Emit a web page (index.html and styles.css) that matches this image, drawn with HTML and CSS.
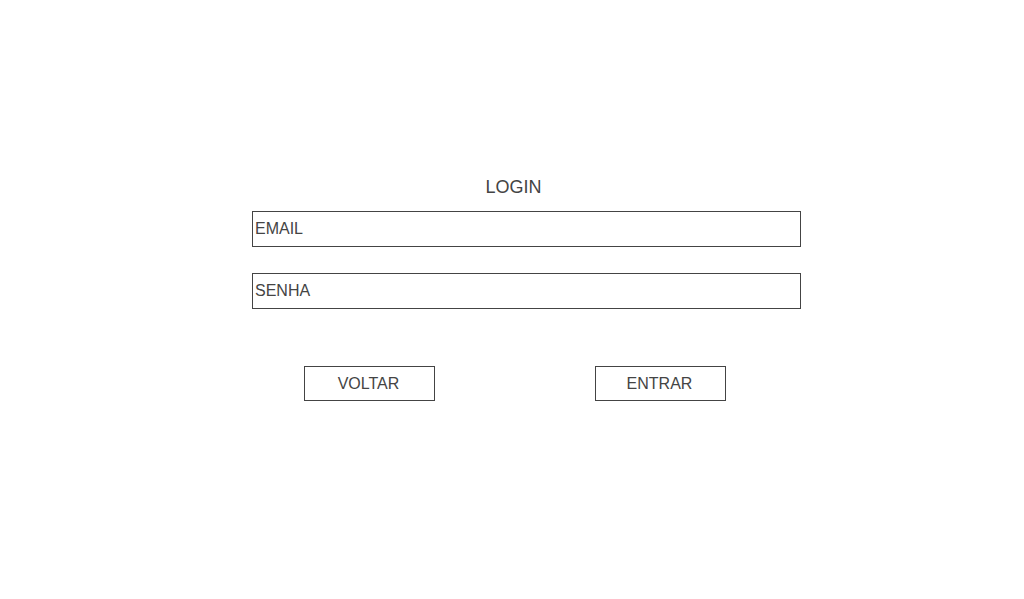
FILE: index.html
```html
<!DOCTYPE html>
<html lang="pt">
<head>
<meta charset="utf-8">
<title>Login</title>
<link rel="stylesheet" href="styles.css">
</head>
<body>
<main class="login">
  <h1 class="login-title">LOGIN</h1>
  <form class="login-form">
    <input class="field" type="email" placeholder="EMAIL">
    <input class="field" type="password" placeholder="SENHA">
    <div class="actions">
      <button type="button" class="btn">VOLTAR</button>
      <button type="submit" class="btn">ENTRAR</button>
    </div>
  </form>
</main>
</body>
</html>
```
FILE: styles.css
```css
html, body {
  margin: 0;
  padding: 0;
  background: #ffffff;
}
body {
  font-family: "Liberation Sans", Arial, sans-serif;
  color: #444444;
}
.login {
  width: 549px;
  margin-left: 252px;
  padding-top: 177px;
}
.login-title {
  margin: 0;
  padding-right: 26px;
  font-size: 18px;
  font-weight: normal;
  line-height: 20px;
  text-align: center;
  color: #444444;
}
.login-form {
  display: flex;
  flex-direction: column;
  margin-top: 14px;
}
.field {
  box-sizing: border-box;
  width: 549px;
  height: 36px;
  margin: 0 0 26px 0;
  padding: 0 2px;
  border: 1px solid #444444;
  border-radius: 0;
  outline: none;
  background: #ffffff;
  font-family: "Liberation Sans", Arial, sans-serif;
  font-size: 16px;
  color: #444444;
}
.field::placeholder {
  color: #444444;
  opacity: 1;
}
.actions {
  display: flex;
  gap: 160px;
  margin-top: 31px;
  padding-left: 52px;
}
.btn {
  box-sizing: border-box;
  width: 131px;
  height: 35px;
  padding: 0 2px 0 0;
  border: 1px solid #444444;
  border-radius: 0;
  background: #ffffff;
  font-family: "Liberation Sans", Arial, sans-serif;
  font-size: 16px;
  color: #444444;
}
```
